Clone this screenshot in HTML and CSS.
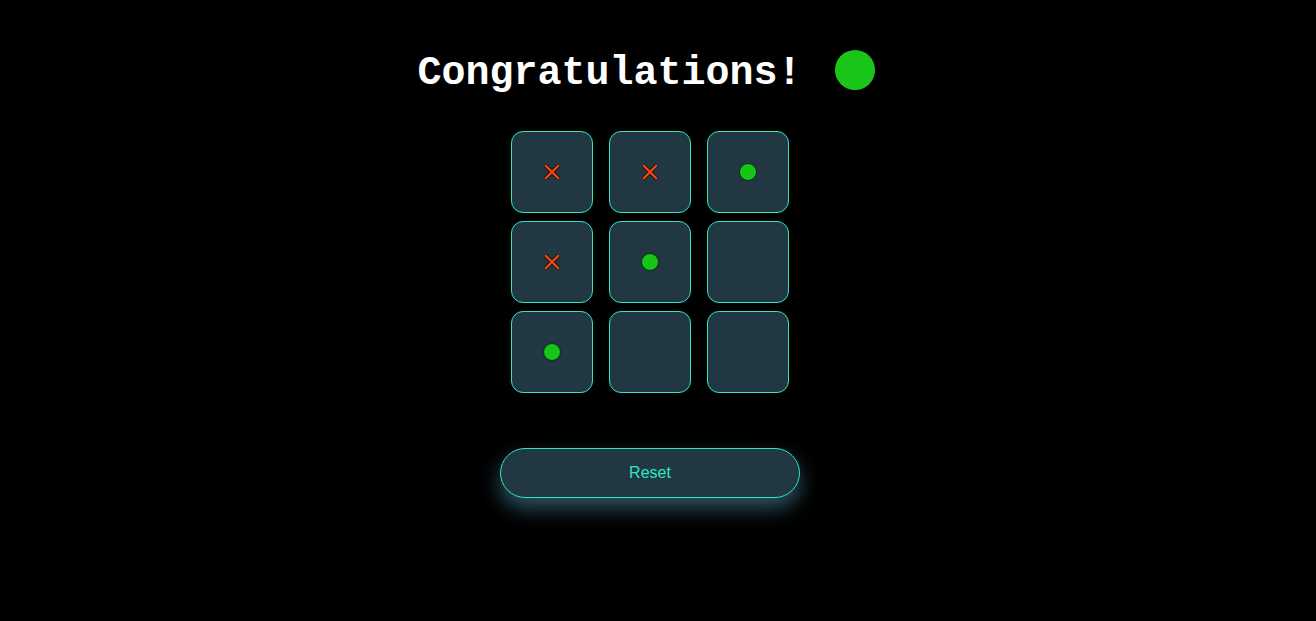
FILE: index.html
```html
<!DOCTYPE html>
<html>
<head>
<meta charset="utf-8">
<link rel="stylesheet" href="styles.css">
</head>
<body>
<main class="app">
  <header class="title">
    <h1 class="title-text">Congratulations!</h1>
    <span class="winner-dot"></span>
  </header>
  <section class="board">
    <div class="cell"><svg class="mark-x" viewBox="0 0 16 16"><path class="x-out" d="M2 2L14 14M14 2L2 14"/><path class="x-in" d="M2 2L14 14M14 2L2 14"/></svg></div>
    <div class="cell"><svg class="mark-x" viewBox="0 0 16 16"><path class="x-out" d="M2 2L14 14M14 2L2 14"/><path class="x-in" d="M2 2L14 14M14 2L2 14"/></svg></div>
    <div class="cell"><span class="mark-o"></span></div>
    <div class="cell"><svg class="mark-x" viewBox="0 0 16 16"><path class="x-out" d="M2 2L14 14M14 2L2 14"/><path class="x-in" d="M2 2L14 14M14 2L2 14"/></svg></div>
    <div class="cell"><span class="mark-o"></span></div>
    <div class="cell"></div>
    <div class="cell"><span class="mark-o"></span></div>
    <div class="cell"></div>
    <div class="cell"></div>
  </section>
  <button class="reset">Reset</button>
</main>
</body>
</html>
```
FILE: styles.css
```css
html, body {
  margin: 0;
  padding: 0;
  background: #000;
}
body {
  width: 1300px;
  min-height: 621px;
}
.app {
  display: flex;
  flex-direction: column;
  align-items: center;
  padding-top: 50px;
}
.title {
  display: flex;
  align-items: flex-start;
  gap: 33px;
  margin-left: -8px;
}
.title-text {
  margin: 0;
  font-family: "Liberation Mono", "Courier New", monospace;
  font-weight: bold;
  font-size: 40px;
  line-height: 48px;
  color: #fff;
}
.winner-dot {
  width: 40px;
  height: 40px;
  border-radius: 50%;
  background: #19c519;
}
.board {
  margin-top: 33px;
  display: grid;
  grid-template-columns: repeat(3, 82px);
  grid-auto-rows: 82px;
  column-gap: 16px;
  row-gap: 8px;
}
.cell {
  box-sizing: border-box;
  border: 1px solid #2ee6c3;
  border-radius: 12px;
  background: #213843;
  display: flex;
  align-items: center;
  justify-content: center;
}
.mark-x {
  width: 18px;
  height: 18px;
}
.x-out {
  stroke: #2a0f08;
  stroke-width: 3.6;
  fill: none;
}
.x-in {
  stroke: #ef4a1e;
  stroke-width: 2;
  fill: none;
}
.mark-o {
  box-sizing: border-box;
  width: 18px;
  height: 18px;
  border-radius: 50%;
  background: #18c418;
  border: 1px solid #0b2a14;
}
.reset {
  margin-top: 55px;
  width: 300px;
  height: 50px;
  border: 1px solid #2ee6c3;
  border-radius: 25px;
  background: #213843;
  color: #2ee6c3;
  font-family: "Liberation Sans", Arial, sans-serif;
  font-size: 16px;
  box-shadow: 0 10px 20px rgba(48, 88, 104, 0.95);
  cursor: pointer;
}
```
